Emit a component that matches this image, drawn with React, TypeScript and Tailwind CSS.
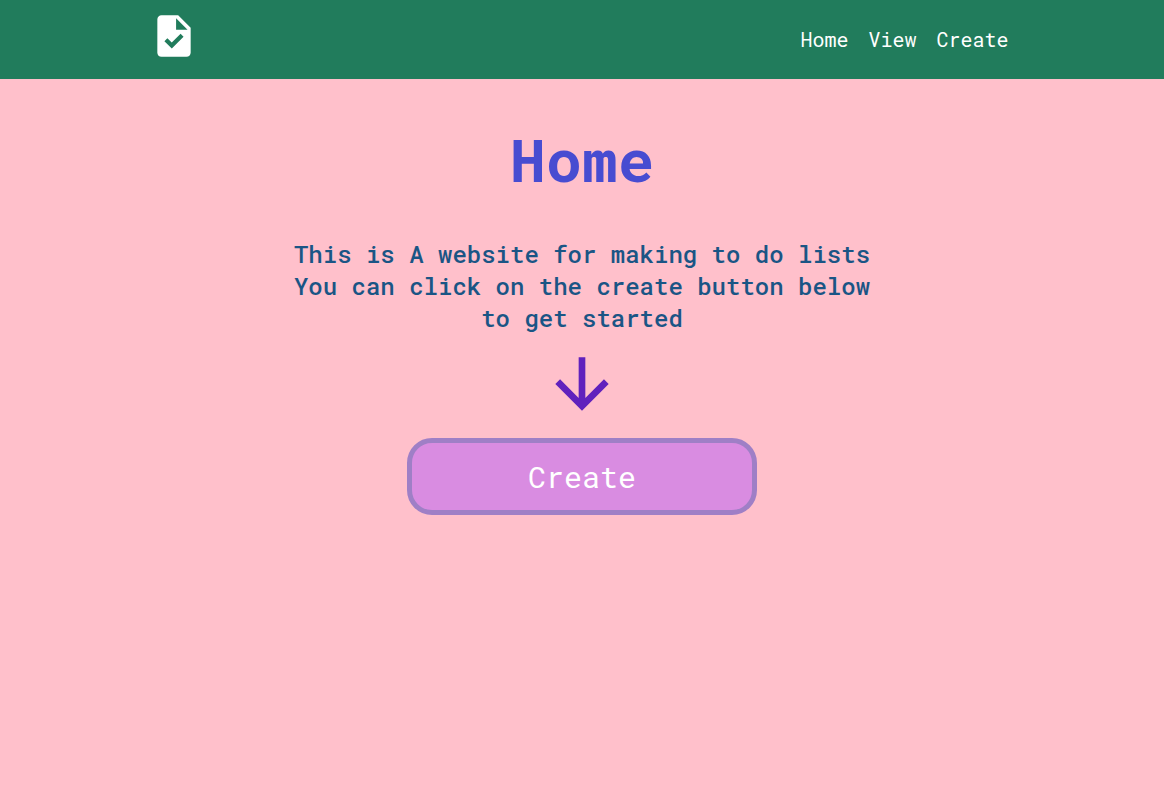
import { MdArrowDownward, MdTask } from "react-icons/md";

const links = ["Home", "View", "Create"];

function Header() {
  return (
    <header className="bg-[#217c5c] text-white">
      <div className="mx-auto flex h-[79px] w-3/4 items-center justify-between pr-[10px] pl-[3px]">
        <a href="#home" aria-label="To do lists" className="mb-2">
          <MdTask size={50} />
        </a>
        <nav className="mb-0.5 flex gap-5 text-xl">
          {links.map((name) => (
            <a key={name} href={`#${name.toLowerCase()}`}>
              {name}
            </a>
          ))}
        </nav>
      </div>
    </header>
  );
}

export default function App() {
  return (
    <div className="min-h-screen bg-[#ffc0cb] font-['Roboto_Mono','DejaVu_Sans_Mono',monospace]">
      <Header />
      <main className="flex flex-col items-center pt-10 text-center">
        <h1 className="text-[60px] leading-[80px] font-bold text-[#474cd1]">Home</h1>
        <p className="mt-[39px] max-w-[600px] text-2xl font-medium text-[#1a5585]">
          This is A website for making to do lists
          <br />
          You can click on the create button below
          <br />
          to get started
        </p>
        <MdArrowDownward size={80} className="mt-[10px] text-[#6021bd]" />
        <button
          type="button"
          className="mt-[14px] w-[30%] rounded-[25px] border-5 border-[#9f7fc6] bg-[#d98ce1] py-[13px] text-3xl leading-[41px] text-white"
        >
          Create
        </button>
      </main>
    </div>
  );
}
